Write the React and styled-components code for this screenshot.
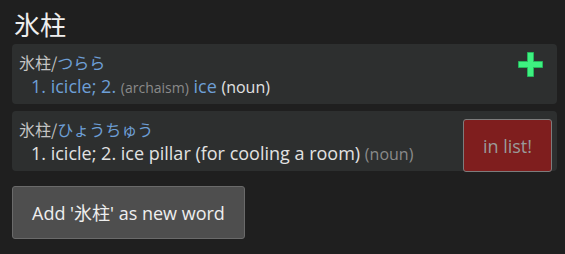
import React from "react";
import styled, { createGlobalStyle } from "styled-components";

const Global = createGlobalStyle`
  html, body { margin: 0; padding: 0; background: #1f1f1f; }
  body {
    font-family: "Open Sans", "Noto Sans CJK JP", sans-serif;
    color: #e2e2e2;
  }
`;

const Page = styled.div`
  padding: 8px 8px 8px 12px;
  display: flex;
  flex-direction: column;
`;

const Heading = styled.h1`
  margin: 0 0 4px 2px;
  font-size: 26px;
  line-height: 32px;
  font-weight: 400;
  color: #eeeeee;
  font-family: "Noto Sans CJK JP", sans-serif;
`;

const Card = styled.div`
  display: flex;
  align-items: flex-start;
  background: #2d2f2f;
  border-radius: 4px;
  padding: 6px 7px;
  margin-bottom: 7px;
`;

const Body = styled.div`
  flex: 1;
  display: flex;
  flex-direction: column;
`;

const WordLine = styled.div`
  font-family: "Noto Sans CJK JP", sans-serif;
  font-size: 16px;
  line-height: 24px;
  height: 24px;
  color: #c4c4c4;
`;

const Kana = styled.span`
  color: #6d9fd6;
`;

const DefLine = styled.div`
  font-size: 18px;
  line-height: 24px;
  height: 24px;
  padding-left: 12px;
  color: #e2e2e2;
  white-space: nowrap;
`;

const Seg = styled.span`
  color: ${(p) => (p.$tone === "blue" ? "#6d9fd6" : p.$tone === "gray" ? "#8a8a8a" : "#e2e2e2")};
  font-size: ${(p) => p.$size || "18px"};
  line-height: 1;
`;

const PlusIcon = styled.svg`
  flex: none;
  margin: 2px 7px 0 0;
`;

const Button = styled.button`
  font-family: "Open Sans", "Noto Sans CJK JP", sans-serif;
  font-size: 18px;
  line-height: 24px;
  height: 53px;
  padding: 0 19px;
  border-radius: 3px;
  border: 1px solid ${(p) => (p.$danger ? "#7c7c7c" : "#6a6a6a")};
  background: ${(p) => (p.$danger ? "#7f1e1e" : "#4e4e4e")};
  color: ${(p) => (p.$danger ? "#9a9a9a" : "#eeeeee")};
  cursor: pointer;
`;

const ListButton = styled(Button)`
  flex: none;
  margin: 2px -2px -7px 0;
`;

const AddButton = styled(Button)`
  align-self: flex-start;
  margin-top: 8px;
`;

const Jp = styled.span`
  font-family: "Noto Sans CJK JP", sans-serif;
  font-size: 18px;
  line-height: 1;
`;

export default function App() {
  return (
    <Page>
      <Global />
      <Heading>氷柱</Heading>
      <Card>
        <Body>
          <WordLine>
            氷柱/<Kana>つらら</Kana>
          </WordLine>
          <DefLine>
            <Seg $tone="blue">1. icicle; 2.</Seg> <Seg $tone="gray" $size="14px">(archaism)</Seg>{" "}
            <Seg $tone="blue">ice</Seg> <Seg $size="16px">(noun)</Seg>
          </DefLine>
        </Body>
        <PlusIcon width="25" height="25" viewBox="0 0 25 25">
          <path
            d="M9.5 0.5 H15.5 V9.5 H24.5 V15.5 H15.5 V24.5 H9.5 V15.5 H0.5 V9.5 H9.5 Z"
            fill="#3ef080"
            stroke="#26b45c"
            strokeWidth="1"
          />
        </PlusIcon>
      </Card>
      <Card>
        <Body>
          <WordLine>
            氷柱/<Kana>ひょうちゅう</Kana>
          </WordLine>
          <DefLine>
            <Seg>1. icicle; 2. ice pillar (for cooling a room)</Seg>{" "}
            <Seg $tone="gray" $size="16px">(noun)</Seg>
          </DefLine>
        </Body>
        <ListButton $danger>in list!</ListButton>
      </Card>
      <AddButton>
        Add '<Jp>氷柱</Jp>' as new word
      </AddButton>
    </Page>
  );
}
